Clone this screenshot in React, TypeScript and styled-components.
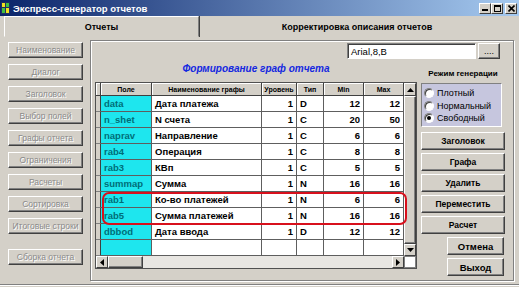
import React from "react";
import styled, { createGlobalStyle } from "styled-components";

const Global = createGlobalStyle`
  html, body { margin: 0; padding: 0; background: #d4d0c8; }
  body { font-family: "Liberation Sans", Arial, sans-serif; font-size: 11px; overflow: hidden; }
  * { box-sizing: border-box; }
`;

const Window = styled.div`
  width: 519px;
  height: 287px;
  background: #d4d0c8;
  display: flex;
  flex-direction: column;
  overflow: hidden;
`;

const TitleBar = styled.div`
  height: 16px;
  flex: none;
  display: flex;
  align-items: center;
  gap: 3px;
  padding: 0 2px 0 1px;
  background: linear-gradient(to right, #0a246a, #a6caf0);
`;

const TitleText = styled.span`
  flex: 1;
  color: #fff;
  font-weight: bold;
  font-size: 9.5px;
  white-space: nowrap;
`;

const Caps = styled.div`
  display: flex;
  gap: 0;
`;

const CapBtn = styled.div<{ $gap?: boolean }>`
  width: 12px;
  height: 11px;
  margin-left: ${(p) => (p.$gap ? "2px" : "0")};
  background: #d4d0c8;
  border: 1px solid;
  border-color: #fff #404040 #404040 #fff;
  display: flex;
  align-items: center;
  justify-content: center;
`;

const TabRow = styled.div`
  height: 21px;
  flex: none;
  display: flex;
  padding: 0 4px;
`;

const Tab = styled.div<{ $raised?: boolean }>`
  display: flex;
  align-items: center;
  justify-content: center;
  font-weight: bold;
  font-size: 9px;
  color: #000;
  ${(p) =>
    p.$raised
      ? `width: 195px; border: 1px solid; border-color: #fff #808080 #d4d0c8 #fff; box-shadow: 1px 0 0 #404040;`
      : `flex: 1;`}
`;

const Body = styled.div`
  display: flex;
  height: 246px;
  flex: none;
`;

const LeftCol = styled.div`
  width: 90px;
  flex: none;
  display: flex;
  flex-direction: column;
  gap: 6px;
  padding: 5px 0 0 8px;
`;

const DisabledBtn = styled.div<{ $extra?: number }>`
  width: 75px;
  height: 16px;
  margin-top: ${(p) => p.$extra || 0}px;
  background: #d4d0c8;
  border: 1px solid;
  border-color: #fff #404040 #404040 #fff;
  box-shadow: inset -1px -1px 0 #808080;
  display: flex;
  align-items: center;
  justify-content: center;
  color: #8a8a8a;
  text-shadow: 1px 1px 0 #fff;
  font-size: 8.5px;
  white-space: nowrap;
`;

const MainFrame = styled.div`
  margin-top: 3px;
  width: 424px;
  height: 241px;
  border: 1px solid #808080;
  box-shadow: inset 1px 1px 0 #fff, 1px 1px 0 #fff;
  display: flex;
  flex-direction: column;
`;

const TopRow = styled.div`
  display: flex;
  justify-content: flex-end;
  gap: 2px;
  padding: 2px 13px 0 0;
  height: 18px;
`;

const FontBox = styled.div`
  width: 129px;
  height: 16px;
  background: #fff;
  border: 1px solid;
  border-color: #808080 #fff #fff #808080;
  box-shadow: inset 1px 1px 0 #404040;
  padding: 1px 0 0 3px;
  font-size: 9.5px;
  line-height: 13px;
`;

const SmallBtn = styled.div`
  width: 22px;
  height: 16px;
  background: #d4d0c8;
  border: 1px solid;
  border-color: #fff #404040 #404040 #fff;
  box-shadow: inset -1px -1px 0 #808080;
  display: flex;
  align-items: center;
  justify-content: center;
  font-size: 9px;
`;

const ContentRow = styled.div`
  display: flex;
  padding-left: 4px;
`;

const GridCol = styled.div`
  width: 322px;
  flex: none;
  display: flex;
  flex-direction: column;
`;

const GridTitle = styled.div`
  height: 23px;
  padding-top: 3px;
  text-align: center;
  color: #1428e0;
  font-style: italic;
  font-weight: bold;
  font-size: 10px;
  line-height: 13px;
`;

const GridBox = styled.div`
  position: relative;
  width: 322px;
  height: 187px;
  border: 1px solid #505050;
  display: grid;
  grid-template-columns: 308px 12px;
  grid-template-rows: 173px 12px;
  background: #fff;
`;

const Table = styled.div`
  display: grid;
  grid-template-columns: 5px 51px 110px 35px 27px 40px 40px;
  grid-template-rows: 13px repeat(10, 16px);
  overflow: hidden;
`;

const HeadCell = styled.div`
  background: #d4d0c8;
  border-right: 1px solid #404040;
  border-bottom: 1px solid #404040;
  box-shadow: inset 1px 1px 0 #fff;
  display: flex;
  align-items: center;
  justify-content: center;
  font-weight: bold;
  font-size: 7px;
  white-space: nowrap;
  overflow: hidden;
`;

const Indicator = styled.div`
  background: #d4d0c8;
  border-right: 1px solid #404040;
  border-bottom: 1px solid #808080;
`;

const Cell = styled.div<{ $kind?: "field" | "num" | "text" }>`
  border-right: 1px solid #5e5e5e;
  border-bottom: 1px solid #5e5e5e;
  display: flex;
  align-items: center;
  padding: 0 3px 0 ${(p) => (p.$kind === "num" ? "0" : "3px")};
  justify-content: ${(p) => (p.$kind === "num" ? "flex-end" : "flex-start")};
  background: ${(p) => (p.$kind === "field" ? "#1ee6ee" : "#fff")};
  color: ${(p) => (p.$kind === "field" ? "#006e78" : "#000")};
  font-weight: bold;
  font-size: 9.5px;
  white-space: nowrap;
  overflow: hidden;
`;

const VScroll = styled.div`
  display: flex;
  flex-direction: column;
  background: #d4d0c8;
`;

const ArrowBtn = styled.div<{ $w?: number; $h?: number }>`
  width: ${(p) => p.$w || 12}px;
  height: ${(p) => p.$h || 12}px;
  flex: none;
  background: #d4d0c8;
  border: 1px solid;
  border-color: #fff #404040 #404040 #fff;
  display: flex;
  align-items: center;
  justify-content: center;
`;

const Thumb = styled.div<{ $w?: number }>`
  ${(p) => (p.$w ? `width: ${p.$w}px;` : "flex: 1;")}
  background: #d4d0c8;
  border: 1px solid;
  border-color: #fff #404040 #404040 #fff;
  box-shadow: inset -1px -1px 0 #808080;
`;

const Track = styled.div`
  flex: 1;
  background: #e8e6e2;
`;

const HScroll = styled.div`
  display: flex;
  background: #e8e6e2;
`;

const Corner = styled.div`
  background: #fff;
  border: 1px solid #808080;
`;

const Highlight = styled.div`
  position: absolute;
  left: 6px;
  top: 109px;
  width: 305px;
  height: 33px;
  border: 2px solid #d8101c;
  border-radius: 7px;
  pointer-events: none;
`;

const RightCol = styled.div`
  width: 84px;
  margin-left: 4px;
  display: flex;
  flex-direction: column;
  padding-top: 10px;
`;

const ModeLabel = styled.div`
  height: 14px;
  text-align: center;
  font-weight: bold;
  font-size: 8px;
  white-space: nowrap;
`;

const RadioBox = styled.div`
  width: 81px;
  height: 44px;
  background: #c6c6de;
  border: 1px solid;
  border-color: #808080 #fff #fff #808080;
  padding: 3px 0 0 2px;
  display: flex;
  flex-direction: column;
`;

const RadioRow = styled.div`
  height: 12.5px;
  display: flex;
  align-items: center;
  gap: 3px;
  font-size: 9px;
  white-space: nowrap;
`;

const RadioDot = styled.div<{ $on?: boolean }>`
  width: 10px;
  height: 10px;
  border-radius: 50%;
  background: #fff;
  border: 1px solid;
  border-color: #808080 #fff #fff #808080;
  box-shadow: inset 1px 1px 0 #404040;
  display: flex;
  align-items: center;
  justify-content: center;
  &::after {
    content: "";
    width: 4px;
    height: 4px;
    border-radius: 50%;
    background: ${(p) => (p.$on ? "#000" : "transparent")};
  }
`;

const Buttons = styled.div`
  display: flex;
  flex-direction: column;
  align-items: flex-end;
  gap: 3px;
  margin-top: 5px;
`;

const ActionBtn = styled.div<{ $w?: number }>`
  width: ${(p) => p.$w || 84}px;
  height: 18px;
  margin-right: ${(p) => (p.$w ? "1px" : "0")};
  background: #d4d0c8;
  border: 1px solid;
  border-color: #fff #404040 #404040 #fff;
  box-shadow: inset -1px -1px 0 #808080;
  display: flex;
  align-items: center;
  justify-content: center;
  font-weight: bold;
  font-size: ${(p) => (p.$w ? "9.5px" : "8.5px")};
  white-space: nowrap;
`;

const StatusStrip = styled.div`
  flex: 1;
  border-top: 1px solid #808080;
  box-shadow: inset 0 1px 0 #fff;
  margin-top: 1px;
`;

const Tri = ({ dir }: { dir: "up" | "down" | "left" | "right" }) => {
  const pts =
    dir === "up"
      ? "0,4 7,4 3.5,0"
      : dir === "down"
      ? "0,0 7,0 3.5,4"
      : dir === "left"
      ? "4,0 4,7 0,3.5"
      : "0,0 0,7 4,3.5";
  const w = dir === "up" || dir === "down" ? 7 : 4;
  const h = dir === "up" || dir === "down" ? 4 : 7;
  return (
    <svg width={w} height={h} viewBox={`0 0 ${w} ${h}`}>
      <polygon points={pts} fill="#000" />
    </svg>
  );
};

const rows = [
  ["data", "Дата платежа", "1", "D", "12", "12"],
  ["n_shet", "N счета", "1", "C", "20", "50"],
  ["naprav", "Направление", "1", "C", "6", "6"],
  ["rab4", "Операция", "1", "C", "8", "8"],
  ["rab3", "КВп", "1", "C", "5", "5"],
  ["summap", "Сумма", "1", "N", "16", "16"],
  ["rab1", "Ко-во платежей", "1", "N", "6", "6"],
  ["rab5", "Сумма платежей", "1", "N", "16", "16"],
  ["dbbod", "Дата ввода", "1", "D", "12", "12"],
  ["", "", "", "", "", ""],
];

const leftButtons = [
  "Наименование",
  "Диалог",
  "Заголовок",
  "Выбор полей",
  "Графы отчета",
  "Ограничения",
  "Расчеты",
  "Сортировка",
  "Итоговые строки",
];

export default function App() {
  return (
    <Window>
      <Global />
      <TitleBar>
        <svg width="9" height="12" viewBox="0 0 9 12">
          <rect x="0" y="0" width="9" height="12" fill="#203060" />
          <rect x="1" y="1" width="3" height="4" fill="#f0e020" />
          <rect x="5" y="1" width="3" height="4" fill="#40c040" />
          <rect x="1" y="6" width="3" height="5" fill="#40c040" />
          <rect x="5" y="6" width="3" height="5" fill="#f0e020" />
        </svg>
        <TitleText>Экспресс-генератор отчетов</TitleText>
        <Caps>
          <CapBtn>
            <svg width="6" height="6" viewBox="0 0 6 6">
              <rect x="0" y="4" width="6" height="2" fill="#000" />
            </svg>
          </CapBtn>
          <CapBtn>
            <svg width="7" height="7" viewBox="0 0 7 7">
              <rect x="0.5" y="0.5" width="6" height="6" fill="none" stroke="#000" />
              <rect x="0" y="0" width="7" height="2" fill="#000" />
            </svg>
          </CapBtn>
          <CapBtn $gap>
            <svg width="7" height="7" viewBox="0 0 7 7">
              <path d="M0.5 0.5 L6.5 6.5 M6.5 0.5 L0.5 6.5" stroke="#000" strokeWidth="1.6" />
            </svg>
          </CapBtn>
        </Caps>
      </TitleBar>
      <TabRow>
        <Tab $raised>Отчеты</Tab>
        <Tab>Корректировка описания отчетов</Tab>
      </TabRow>
      <Body>
        <LeftCol>
          {leftButtons.map((b) => (
            <DisabledBtn key={b}>{b}</DisabledBtn>
          ))}
          <DisabledBtn $extra={9}>Сборка отчета</DisabledBtn>
        </LeftCol>
        <MainFrame>
          <TopRow>
            <FontBox>Arial,8,B</FontBox>
            <SmallBtn>....</SmallBtn>
          </TopRow>
          <ContentRow>
            <GridCol>
              <GridTitle>Формирование граф отчета</GridTitle>
              <GridBox>
                <Table>
                  <HeadCell />
                  <HeadCell>Поле</HeadCell>
                  <HeadCell>Наименование графы</HeadCell>
                  <HeadCell>Уровень</HeadCell>
                  <HeadCell>Тип</HeadCell>
                  <HeadCell>Min</HeadCell>
                  <HeadCell>Max</HeadCell>
                  {rows.map((r, i) => (
                    <React.Fragment key={i}>
                      <Indicator />
                      <Cell $kind="field">{r[0]}</Cell>
                      <Cell $kind="text">{r[1]}</Cell>
                      <Cell $kind="num">{r[2]}</Cell>
                      <Cell $kind="text">{r[3]}</Cell>
                      <Cell $kind="num">{r[4]}</Cell>
                      <Cell $kind="num">{r[5]}</Cell>
                    </React.Fragment>
                  ))}
                </Table>
                <VScroll>
                  <ArrowBtn $h={13}>
                    <Tri dir="up" />
                  </ArrowBtn>
                  <Thumb />
                  <ArrowBtn>
                    <Tri dir="down" />
                  </ArrowBtn>
                </VScroll>
                <HScroll>
                  <ArrowBtn>
                    <Tri dir="left" />
                  </ArrowBtn>
                  <Thumb $w={35} />
                  <Track />
                  <ArrowBtn>
                    <Tri dir="right" />
                  </ArrowBtn>
                </HScroll>
                <Corner />
                <Highlight />
              </GridBox>
            </GridCol>
            <RightCol>
              <ModeLabel>Режим генерации</ModeLabel>
              <RadioBox>
                <RadioRow>
                  <RadioDot />
                  Плотный
                </RadioRow>
                <RadioRow>
                  <RadioDot />
                  Нормальный
                </RadioRow>
                <RadioRow>
                  <RadioDot $on />
                  Свободный
                </RadioRow>
              </RadioBox>
              <Buttons>
                <ActionBtn>Заголовок</ActionBtn>
                <ActionBtn>Графа</ActionBtn>
                <ActionBtn>Удалить</ActionBtn>
                <ActionBtn>Переместить</ActionBtn>
                <ActionBtn>Расчет</ActionBtn>
                <ActionBtn $w={57}>Отмена</ActionBtn>
                <ActionBtn $w={57}>Выход</ActionBtn>
              </Buttons>
            </RightCol>
          </ContentRow>
        </MainFrame>
      </Body>
      <StatusStrip />
    </Window>
  );
}
